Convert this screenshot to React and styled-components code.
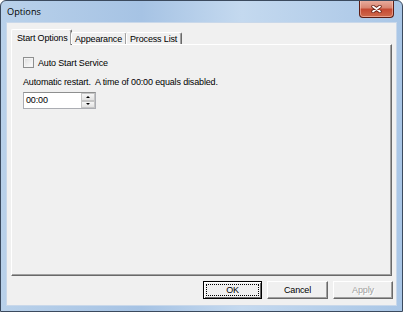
import React from 'react'
import styled, { createGlobalStyle } from 'styled-components'

const Global = createGlobalStyle`
  html, body { margin: 0; padding: 0; background: #ffffff; }
  body {
    font-family: "Liberation Sans", Arial, sans-serif;
    font-size: 9px;
    letter-spacing: -0.15px;
    color: #000;
  }
`

const Window = styled.div`
  box-sizing: border-box;
  width: 403px;
  height: 312px;
  display: flex;
  flex-direction: column;
  border: 1px solid #3b4a5e;
  border-radius: 6px 6px 0 0;
  background: linear-gradient(90deg, #b9d1ea 0%, #a6c3e4 35%, #c4d9ef 60%, #a9c6e6 100%);
  overflow: hidden;
`

const TitleBar = styled.div`
  height: 22px;
  display: flex;
  align-items: flex-start;
  justify-content: space-between;
  padding-left: 6px;
`

const Title = styled.div`
  font-family: "Open Sans", "Noto Sans", sans-serif;
  font-size: 9.2px;
  letter-spacing: 0;
  line-height: 22px;
  color: #000;
`

const CloseButton = styled.div`
  box-sizing: border-box;
  width: 35px;
  height: 18px;
  margin-right: 8px;
  margin-top: -1px;
  border: 1px solid #5c1d14;
  border-top: none;
  border-radius: 0 0 4px 4px;
  background: linear-gradient(180deg, #eab0a2 0%, #d98672 45%, #c54a33 55%, #cf6a4c 100%);
  box-shadow: inset 0 0 0 1px rgba(255, 210, 200, 0.5);
  display: flex;
  align-items: center;
  justify-content: center;
`

const Frame = styled.div`
  flex: 1;
  display: flex;
  padding: 0 6px 6px 6px;
`

const Client = styled.div`
  flex: 1;
  display: flex;
  flex-direction: column;
  background: #f0f0f0;
  padding: 6px 0 6px 0;
  box-shadow: 0 0 0 1px #c9d8ea;
`

const TabStrip = styled.div`
  display: flex;
  align-items: flex-end;
  height: 15px;
  margin-left: 4px;
  position: relative;
  z-index: 1;
`

const Tab = styled.div`
  box-sizing: border-box;
  width: ${p => p.$w}px;
  height: ${p => (p.$active ? '16px' : '12px')};
  margin-bottom: ${p => (p.$active ? '-1px' : '0')};
  margin-left: ${p => (p.$active ? '0' : '-1px')};
  padding-left: ${p => (p.$active ? '5px' : '3px')};
  background: #f0f0f0;
  border-top: 1px solid #ffffff;
  border-left: 1px solid #ffffff;
  border-right: 1px solid #696969;
  border-radius: 2px 2px 0 0;
  box-shadow: inset -1px 0 0 #a0a0a0;
  line-height: ${p => (p.$active ? '16px' : '12px')};
  white-space: nowrap;
  &:first-child { margin-left: 0; }
`

const Panel = styled.div`
  flex: 1;
  box-sizing: border-box;
  margin: 0 4px 0 4px;
  border-top: 1px solid #ffffff;
  border-left: 1px solid #ffffff;
  border-right: 1px solid #696969;
  border-bottom: 1px solid #696969;
  box-shadow: inset -1px -1px 0 #a0a0a0;
  padding: 12px 11px;
  display: flex;
  flex-direction: column;
`

const CheckRow = styled.label`
  display: flex;
  align-items: center;
  gap: 4px;
  height: 11px;
`

const CheckBox = styled.span`
  box-sizing: border-box;
  width: 11px;
  height: 11px;
  border: 1px solid #8e8f8f;
  background: linear-gradient(135deg, #dcdcdc 0%, #ffffff 100%);
  box-shadow: inset 0 0 0 1px #f4f4f4;
`

const Note = styled.div`
  margin-top: 9px;
  height: 11px;
  line-height: 11px;
  white-space: pre;
`

const Spinner = styled.div`
  box-sizing: border-box;
  margin-top: 4px;
  width: 73px;
  height: 17px;
  display: flex;
  border: 1px solid #abadb3;
  border-top-color: #8e8f8f;
  background: #fff;
`

const SpinText = styled.div`
  flex: 1;
  padding-left: 2px;
  line-height: 15px;
`

const SpinButtons = styled.div`
  width: 14px;
  display: flex;
  flex-direction: column;
`

const SpinButton = styled.div`
  flex: 1;
  box-sizing: border-box;
  border: 1px solid #c5c5c5;
  background: linear-gradient(180deg, #f6f6f6 0%, #e2e2e2 100%);
  display: flex;
  align-items: center;
  justify-content: center;
`

const Arrow = styled.span`
  width: 0;
  height: 0;
  border-left: 2px solid transparent;
  border-right: 2px solid transparent;
  ${p => (p.$up ? 'border-bottom: 2px solid #000;' : 'border-top: 2px solid #000;')}
`

const ButtonRow = styled.div`
  display: flex;
  justify-content: flex-end;
  gap: 5px;
  margin: 5px 3px 0 0;
  height: 18px;
`

const Button = styled.div`
  box-sizing: border-box;
  width: ${p => p.$w}px;
  height: 18px;
  background: #f0f0f0;
  border-top: 1px solid ${p => (p.$default ? '#000' : '#ffffff')};
  border-left: 1px solid ${p => (p.$default ? '#000' : '#ffffff')};
  border-right: 1px solid ${p => (p.$default ? '#000' : '#696969')};
  border-bottom: 1px solid ${p => (p.$default ? '#000' : '#696969')};
  box-shadow: ${p => (p.$default ? 'inset 1px 1px 0 #fff, inset -1px -1px 0 #696969' : 'inset -1px -1px 0 #a0a0a0')};
  color: ${p => (p.$disabled ? '#a0a0a0' : '#000')};
  text-shadow: ${p => (p.$disabled ? '1px 1px 0 #fff' : 'none')};
  display: flex;
  align-items: center;
  justify-content: center;
  padding: 2px;
`

const Focus = styled.div`
  box-sizing: border-box;
  flex: 1;
  align-self: stretch;
  border: 1px dotted #000;
  display: flex;
  align-items: center;
  justify-content: center;
`

export default function App() {
  return (
    <>
      <Global />
      <Window>
        <TitleBar>
          <Title>Options</Title>
          <CloseButton>
            <svg width="11" height="8" viewBox="0 0 11 8">
              <path d="M2 1.5 L9 6.5 M9 1.5 L2 6.5" stroke="#6a2418" strokeWidth="3.4" strokeLinecap="round" />
              <path d="M2 1.5 L9 6.5 M9 1.5 L2 6.5" stroke="#ffffff" strokeWidth="1.8" strokeLinecap="round" />
            </svg>
          </CloseButton>
        </TitleBar>
        <Frame>
          <Client>
            <TabStrip>
              <Tab $active $w={61}>Start Options</Tab>
              <Tab $w={56}>Appearance</Tab>
              <Tab $w={56}>Process List</Tab>
            </TabStrip>
            <Panel>
              <CheckRow>
                <CheckBox />
                Auto Start Service
              </CheckRow>
              <Note>Automatic restart.  A time of 00:00 equals disabled.</Note>
              <Spinner>
                <SpinText>00:00</SpinText>
                <SpinButtons>
                  <SpinButton><Arrow $up /></SpinButton>
                  <SpinButton><Arrow /></SpinButton>
                </SpinButtons>
              </Spinner>
            </Panel>
            <ButtonRow>
              <Button $w={59} $default><Focus>OK</Focus></Button>
              <Button $w={61}>Cancel</Button>
              <Button $w={60} $disabled>Apply</Button>
            </ButtonRow>
          </Client>
        </Frame>
      </Window>
    </>
  )
}
